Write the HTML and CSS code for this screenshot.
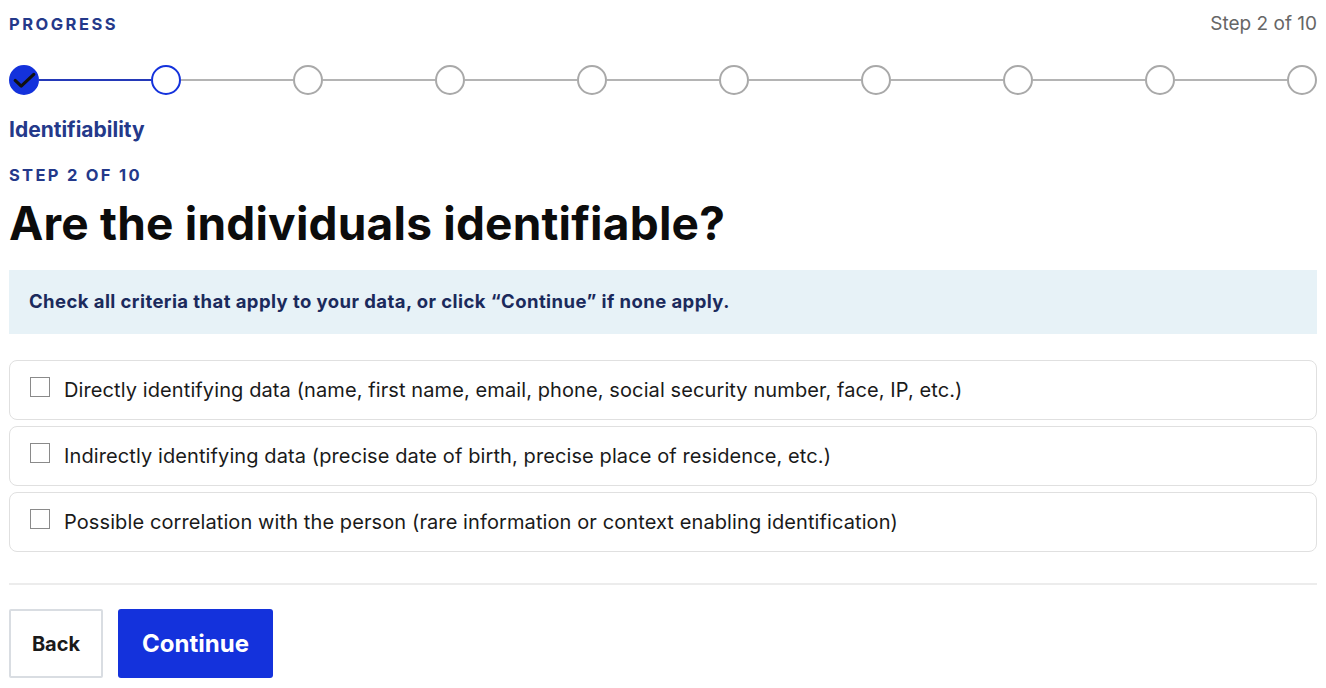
FILE: index.html
```html
<!DOCTYPE html>
<html lang="en">
<head>
    <meta charset="UTF-8">
    <title>Identifiability</title>
    <link rel="stylesheet" href="styles.css">
</head>
<body>
    <div class="progress-head">
        <span class="progress-label">PROGRESS</span>
        <span class="progress-count">Step 2 of 10</span>
    </div>

    <div class="stepper">
        <div class="dot done">
            <svg viewBox="0 0 28 28" width="28" height="28"><path d="M4.5 14.5l6.5 6L24.5 8" fill="none" stroke="#111" stroke-width="3.4" stroke-linecap="round" stroke-linejoin="round"/></svg>
        </div>
        <div class="line active"></div>
        <div class="dot current"></div>
        <div class="line"></div>
        <div class="dot"></div>
        <div class="line"></div>
        <div class="dot"></div>
        <div class="line"></div>
        <div class="dot"></div>
        <div class="line"></div>
        <div class="dot"></div>
        <div class="line"></div>
        <div class="dot"></div>
        <div class="line"></div>
        <div class="dot"></div>
        <div class="line"></div>
        <div class="dot"></div>
        <div class="line"></div>
        <div class="dot"></div>
    </div>

    <div class="step-name">Identifiability</div>
    <div class="step-kicker">STEP 2 OF 10</div>
    <h1 class="title">Are the individuals identifiable?</h1>

    <div class="notice">Check all criteria that apply to your data, or click “Continue” if none apply.</div>

    <div class="options">
        <label class="option"><input type="checkbox"><span>Directly identifying data (name, first name, email, phone, social security number, face, IP, etc.)</span></label>
        <label class="option"><input type="checkbox"><span>Indirectly identifying data (precise date of birth, precise place of residence, etc.)</span></label>
        <label class="option"><input type="checkbox"><span>Possible correlation with the person (rare information or context enabling identification)</span></label>
    </div>

    <div class="actions">
        <button class="btn-back">Back</button>
        <button class="btn-continue">Continue</button>
    </div>
</body>
</html>
```

FILE: styles.css
```css
* {
    margin: 0;
    padding: 0;
    box-sizing: border-box;
    font-family: Inter, 'Noto Sans', sans-serif;
}

body {
    background: #fff;
    padding: 9px 9px 0 9px;
    color: #111;
}

.progress-head {
    display: flex;
    justify-content: space-between;
    align-items: center;
    height: 29px;
}

.progress-label {
    color: #24398a;
    font-size: 16.5px;
    font-weight: 700;
    letter-spacing: 2.5px;
}

.progress-count {
    color: #666;
    font-size: 19px;
}

.stepper {
    display: flex;
    align-items: center;
    margin-top: 28px;
    height: 28px;
}

.dot {
    width: 30px;
    height: 30px;
    border-radius: 50%;
    border: 2px solid #a9a9a9;
    background: #fff;
    flex-shrink: 0;
    display: flex;
    align-items: center;
    justify-content: center;
}

.dot.done {
    background: #1432dc;
    border-color: #1432dc;
}

.dot.current {
    border-color: #1432dc;
}

.line {
    flex: 1;
    height: 2px;
    background: #b4b4b4;
}

.line.active {
    background: #2439b8;
}

.step-name {
    color: #24398a;
    font-size: 21px;
    font-weight: 700;
    margin-top: 23px;
}

.step-kicker {
    color: #24398a;
    font-size: 16.5px;
    font-weight: 700;
    letter-spacing: 2.3px;
    margin-top: 23px;
}

.title {
    font-size: 46px;
    font-weight: 700;
    color: #0c0c0c;
    margin-top: 10px;
    letter-spacing: 0.2px;
}

.notice {
    background: #e7f2f7;
    color: #1b2a5c;
    font-size: 18.5px;
    font-weight: 700;
    letter-spacing: 0.42px;
    padding: 20px 20px;
    margin-top: 19px;
    height: 64px;
}

.options {
    display: flex;
    flex-direction: column;
    gap: 6px;
    margin-top: 26px;
}

.option {
    display: flex;
    align-items: center;
    gap: 14px;
    height: 60px;
    padding: 0 20px;
    border: 1px solid #e0e0e0;
    border-radius: 8px;
    font-size: 20px;
    letter-spacing: 0.1px;
    color: #1a1a1a;
}

.option input {
    appearance: none;
    width: 20px;
    height: 20px;
    border: 1px solid #8a8a8a;
    background: #fff;
    margin-top: -6px;
    flex-shrink: 0;
}

.actions {
    border-top: 2px solid #ececec;
    margin-top: 31px;
    padding-top: 24px;
    display: flex;
    gap: 15px;
}

.btn-back {
    width: 94px;
    height: 69px;
    background: #fff;
    border: 2px solid #d9dde2;
    border-radius: 2px;
    font-size: 20px;
    font-weight: 700;
    color: #1a1a1a;
}

.btn-continue {
    width: 155px;
    height: 69px;
    background: #1432dc;
    border: none;
    border-radius: 3px;
    font-size: 24px;
    font-weight: 700;
    color: #fff;
}
```
